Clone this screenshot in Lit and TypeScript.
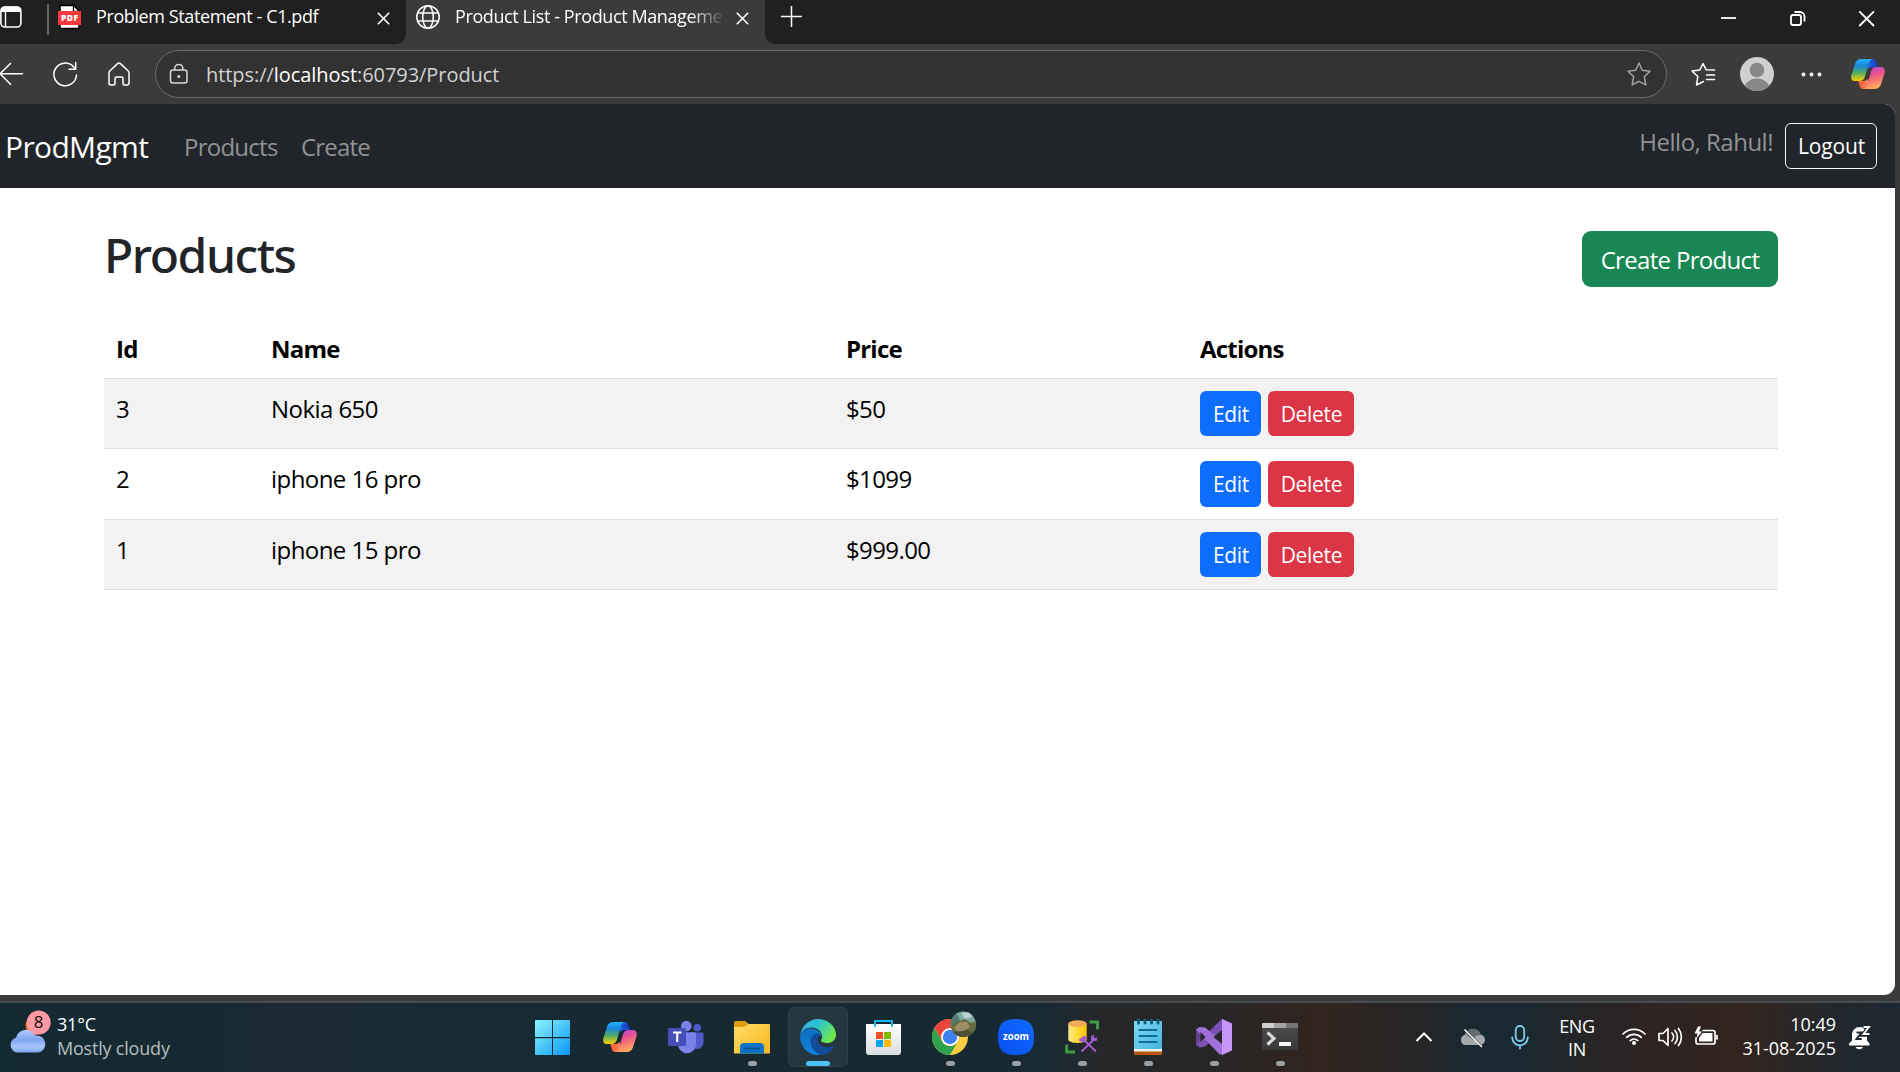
import { LitElement, html, css, svg, nothing } from "lit";
import { customElement } from "lit/decorators.js";

/* Four-colour ribbon mark, drawn in a 34 x 31 box. Used in the toolbar and the taskbar. */
const copilotMark = svg`
  <defs>
    <linearGradient id="cpA" x1="0" y1="0" x2="0" y2="1">
      <stop offset="0" stop-color="#22b5ff"/><stop offset=".3" stop-color="#1a86dc"/>
      <stop offset=".62" stop-color="#4fae62"/><stop offset="1" stop-color="#ffd000"/>
    </linearGradient>
    <linearGradient id="cpB" x1="0" y1="0" x2="0.3" y2="1">
      <stop offset="0" stop-color="#a54bf0"/><stop offset=".45" stop-color="#ee5189"/>
      <stop offset="1" stop-color="#ffa95a"/>
    </linearGradient>
    <linearGradient id="cpC" x1="0" y1="0" x2="1" y2="0">
      <stop offset="0" stop-color="#1d6fe0"/><stop offset="1" stop-color="#1439c4"/>
    </linearGradient>
    <linearGradient id="cpD" x1="0" y1="0" x2="1" y2="0">
      <stop offset="0" stop-color="#ff5a30"/><stop offset="1" stop-color="#ff8a5a"/>
    </linearGradient>
  </defs>
  <path fill="url(#cpC)" d="M15 .4H21.5C24 .4 24.8 2 25.4 4L26.8 8.6H22C20 8.6 18.6 9 17.6 11Z"/>
  <path fill="url(#cpD)" d="M19 30.6H12.5C10 30.6 9.2 29 8.6 27L7.2 22.4H12C14 22.4 15.4 22 16.4 20Z"/>
  <path fill="url(#cpA)" d="M10.5 .4H22C19.5 .6 18.6 2.4 17.8 5L14 18C13 21.2 11.4 22.6 8.4 22.6H4.4C.8 22.6-.4 20 .4 16.4L4 5.2C5 2 7 .4 10.5 .4Z"/>
  <path fill="url(#cpB)" d="M23.5 30.6H12C14.5 30.4 15.4 28.6 16.2 26L20 13C21 9.8 22.6 8.4 25.6 8.4H29.6C33.2 8.4 34.4 11 33.6 14.6L30 25.8C29 29 27 30.6 23.5 30.6Z"/>`;

const closeGlyph = html`<svg class="x" width="13" height="13" viewBox="0 0 13 13">
  <path d="M.8 .8L12.2 12.2M12.2 .8L.8 12.2" stroke="#fff" stroke-width="1.6" fill="none"/></svg>`;

@customElement("browser-bar")
export class BrowserBar extends LitElement {
  static styles = css`
    :host { display: block; height: 104px; background: #3b3b3b; color: #fff; font-family: "Open Sans", "Noto Sans", sans-serif; }
    svg { display: block; flex: none; }
    .strip { display: flex; height: 44px; }
    .dark { background: #202020; display: flex; align-items: flex-start; }
    .left { width: 406px; border-bottom-right-radius: 10px; box-sizing: border-box; }
    .active { width: 359px; display: flex; }
    .right { flex: 1; border-bottom-left-radius: 10px; }
    .panes { margin-top: 5px; }
    .rule { width: 2px; height: 31px; background: #636363; margin: 4px 9px 0 24px; }
    .pdf { margin-top: 4px; }
    .title { font-size: 18px; line-height: 24px; letter-spacing: -0.4px; white-space: nowrap; overflow: hidden; margin-top: 4px; }
    .t1 { width: 264px; margin-left: 15px; }
    .t2 { width: 267px; margin-left: 15px; -webkit-mask-image: linear-gradient(90deg, #000 88%, transparent 101%); mask-image: linear-gradient(90deg, #000 88%, transparent 101%); }
    .x { margin-top: 11.5px; }
    .left .x { margin-left: 17px; }
    .active .x { margin-left: 14px; }
    .globe { margin: 5px 0 0 10px; }
    .plus { margin: 6px 0 0 16px; }
    .win { margin-left: auto; }
    .tools { display: flex; height: 60px; align-items: center; }
    .nav { margin-top: -1px; }
    .pill { width: 1512px; height: 48px; box-sizing: border-box; border: 1.5px solid #6b6b6b; border-radius: 24px; background: #323232; display: flex; align-items: center; padding: 0 15px 0 13px; }
    .url { font-size: 20px; line-height: 28px; margin-left: 17px; color: #d2d2d2; letter-spacing: -0.06px; white-space: nowrap; padding-top: 1px; }
    .url b { font-weight: 400; color: #fff; }
    .fav { margin-left: auto; }
    .extras { flex: none; }
  `;
  render() {
    return html`
      <div class="strip">
        <div class="dark left">
          <svg class="panes" width="23" height="24" viewBox="0 0 23 24">
            <rect x=".9" y="2" width="20" height="20" rx="4" fill="none" stroke="#fff" stroke-width="1.6"/>
            <path d="M1 7V5.500A4 4 0 0 1 5 1.600H17A4 4 0 0 1 21 5.500V7Z" fill="#fff"/>
            <path d="M5.500 7V22" stroke="#fff" stroke-width="1.4"/>
          </svg>
          <div class="rule"></div>
          <svg class="pdf" width="23" height="26" viewBox="0 0 23 26">
            <path d="M2 1.500H16L21 7V24.500H2Z" fill="#fff" stroke="#000" stroke-width="1.6"/>
            <path d="M15.500 1V7.500H21.500Z" fill="#fff" stroke="#000" stroke-width="1.4"/>
            <rect x="0" y="7" width="23" height="14" fill="#f8393e"/>
            <text x="11.5" y="17.3" font-size="8.5" font-weight="800" text-anchor="middle" fill="#fff" textLength="17">PDF</text>
          </svg>
          <div class="title t1">Problem Statement - C1.pdf</div>
          ${closeGlyph}
        </div>
        <div class="active">
          <svg class="globe" width="24" height="24" viewBox="0 0 24 24" fill="none" stroke="#fff" stroke-width="1.5">
            <circle cx="12" cy="12" r="11.2"/><ellipse cx="12" cy="12" rx="5.3" ry="11.2"/>
            <path d="M1.500 8H22.500M1.500 16H22.500"/>
          </svg>
          <div class="title t2">Product List - Product Manageme</div>
          ${closeGlyph}
        </div>
        <div class="dark right">
          <svg class="plus" width="21" height="21" viewBox="0 0 21 21"><path d="M10.500 0V21M0 10.500H21" stroke="#fff" stroke-width="1.5"/></svg>
          <svg class="win" width="206" height="44" viewBox="0 0 206 44" fill="none" stroke="#fff" stroke-width="1.8">
            <path d="M27 18H42"/>
            <rect x="97" y="15" width="10" height="10" rx="2"/><path d="M100.500 12H106A4.500 4.500 0 0 1 110.500 16.500V21.500"/>
            <path d="M165.300 11.300L180 26M180 11.300L165.300 26"/>
          </svg>
        </div>
      </div>
      <div class="tools">
        <svg class="nav" width="155" height="48" viewBox="0 50 155 48" fill="none" stroke="#fff" stroke-width="1.5" stroke-linecap="round" stroke-linejoin="round">
          <path d="M22.500 73.800H0M10.500 63.500L0 73.800L10.500 84.200"/>
          <path d="M76.500 75A11.300 11.300 0 1 1 73.300 66.500L75.700 69M75.700 62.500V69.300H69"/>
          <path d="M109 84V73Q109 71.600 110 70.700L117.600 63.600Q119 62.400 120.400 63.600L128 70.700Q129 71.600 129 73V83Q129 85 127 85H124.500Q123 85 123 83.500V78.500Q123 77 121.500 77H116.500Q115 77 115 78.500V83.500Q115 85 113.500 85H111Q109 85 109 83Z"/>
        </svg>
        <div class="pill">
          <svg width="20" height="22" viewBox="0 0 20 22" fill="none" stroke="#d8d8d8" stroke-width="1.5">
            <rect x="1.5" y="7" width="16.5" height="13" rx="2.5"/><path d="M5.700 7V5.500A4 4 0 0 1 13.800 5.500V7"/><circle cx="9.8" cy="13.5" r="1.5" fill="#d8d8d8" stroke="none"/>
          </svg>
          <div class="url">https://<b>localhost</b>:60793/Product</div>
          <svg class="fav" width="24" height="24" viewBox="0 0 24 24" fill="none" stroke="#a3a3a3" stroke-width="1.5" stroke-linejoin="round">
            <path d="M12 1L15.300 8.300L23 9.300L17.300 14.700L18.800 22.800L12 19.400L5.200 22.800L6.700 14.700L1 9.300L8.700 8.300Z"/>
          </svg>
        </div>
        <svg class="extras" width="233" height="60" viewBox="1667 44 233 60">
          <g fill="none" stroke="#fff" stroke-width="1.5" stroke-linejoin="round" stroke-linecap="round">
            <path d="M1703.500 81.500L1696.500 85L1697.800 76.500L1692 71L1699.800 70L1703 63.500L1706.200 69.800L1714.500 70M1706.500 75H1714.500M1706.500 79.500H1714.500"/>
          </g>
          <clipPath id="av"><circle cx="1757" cy="74" r="17"/></clipPath>
          <circle cx="1757" cy="74" r="17" fill="#d2d0ce"/>
          <circle cx="1757" cy="70" r="7.3" fill="#8a8886"/>
          <ellipse cx="1757" cy="90" rx="13" ry="11.5" fill="#8a8886" clip-path="url(#av)"/>
          <g fill="#fff"><circle cx="1803.5" cy="74.5" r="2"/><circle cx="1811.5" cy="74.5" r="2"/><circle cx="1819.5" cy="74.5" r="2"/></g>
          <g transform="translate(1851 58.500)">${copilotMark}</g>
        </svg>
      </div>`;
  }
}

interface Product { id: number; name: string; price: string; }

@customElement("product-page")
export class ProductPage extends LitElement {
  static styles = css`
    :host { display: block; width: 1895px; height: 891px; background: #fff; border-radius: 0 11px 11px 0; overflow: hidden; font-family: "Open Sans", "Noto Sans", sans-serif; font-size: 24px; line-height: 36px; }
    .navbar { height: 84px; background: #212529; display: flex; align-items: flex-start; box-sizing: border-box; padding: 19px 18px 0 5px; white-space: nowrap; }
    .brand { font-size: 30px; line-height: 46px; color: #fff; letter-spacing: -0.65px; width: 179px; padding-top: 1px; }
    .link { color: #909294; letter-spacing: -0.75px; padding-top: 6px; }
    .products { width: 117px; }
    .create { letter-spacing: -0.8px; }
    .hello { margin: -5px 12px 0 auto; letter-spacing: -0.5px; }
    .logout { box-sizing: border-box; width: 92px; height: 46px; border: 1.5px solid #f8f9fa; border-radius: 6px; color: #fff; font-size: 21px; line-height: 45px; text-align: center; letter-spacing: -0.15px; padding-left: 1px; }
    .content { padding: 43px 117px 0 104px; }
    .head { display: flex; justify-content: space-between; align-items: flex-start; height: 87px; }
    h1 { margin: -5px 0 0; font: 500 48px/58px "Noto Sans", sans-serif; letter-spacing: -1.45px; color: #212529; }
    .add { width: 196px; height: 56px; border-radius: 9px; background: #198754; color: #fff; text-align: center; line-height: 58px; letter-spacing: -0.68px; }
    table { width: 1674px; border-collapse: separate; border-spacing: 0; table-layout: fixed; color: #000; }
    th, td { text-align: left; vertical-align: top; box-sizing: border-box; border-bottom: 1px solid #dee2e6; padding: 12px 12px 0; }
    th { height: 61px; font-weight: 700; letter-spacing: -0.8px; padding-top: 13px; }
    td { height: 70px; letter-spacing: -0.6px; }
    tbody tr:nth-child(2) td { height: 71px; }
    tbody tr:nth-child(2) .btn { height: 46px; }
    tbody tr:nth-child(odd) td { background: #f2f2f2; }
    tbody tr td:nth-child(-n + 2) { letter-spacing: -0.55px; }
    .c1 { width: 155px; } .c2 { width: 575px; } .c3 { width: 354px; }
    .acts { display: flex; gap: 7px; }
    .btn { height: 45px; border-radius: 6px; color: #fff; font-size: 21px; line-height: 46px; text-align: center; letter-spacing: -0.3px; box-sizing: border-box; padding-left: 1px; }
    .edit { width: 61px; background: #0d6efd; }
    .del { width: 86px; background: #dc3545; }
  `;
  private items: Product[] = [
    { id: 3, name: "Nokia 650", price: "$50" },
    { id: 2, name: "iphone 16 pro", price: "$1099" },
    { id: 1, name: "iphone 15 pro", price: "$999.00" },
  ];
  render() {
    return html`
      <div class="navbar">
        <span class="brand">ProdMgmt</span>
        <span class="link products">Products</span>
        <span class="link create">Create</span>
        <span class="link hello">Hello, Rahul!</span>
        <span class="logout">Logout</span>
      </div>
      <div class="content">
        <div class="head"><h1>Products</h1><div class="add">Create Product</div></div>
        <table>
          <thead><tr><th class="c1">Id</th><th class="c2">Name</th><th class="c3">Price</th><th>Actions</th></tr></thead>
          <tbody>
            ${this.items.map((p) => html`<tr>
              <td>${p.id}</td><td>${p.name}</td><td>${p.price}</td>
              <td><div class="acts"><div class="btn edit">Edit</div><div class="btn del">Delete</div></div></td>
            </tr>`)}
          </tbody>
        </table>
      </div>`;
  }
}

/* Each application icon is drawn in a 66 x 69 cell. */
const apps = [
  { state: "none", art: svg`
    <defs><linearGradient id="st" gradientUnits="userSpaceOnUse" x1="14" y1="17" x2="49" y2="52"><stop offset="0" stop-color="#8af4ff"/><stop offset="1" stop-color="#0a97f5"/></linearGradient></defs>
    <path fill="url(#st)" d="M15 17H31V34H14V18Q14 17 15 17ZM32 17H48Q49 17 49 18V34H32ZM14 35.200H31V52H15Q14 52 14 51ZM32 35.200H49V51Q49 52 48 52H32Z"/>` },
  { state: "none", art: svg`<g transform="translate(16 18.500)">${copilotMark}</g>` },
  { state: "none", art: svg`
    <circle cx="44.3" cy="24.7" r="3.8" fill="#5059c9"/><circle cx="33.3" cy="23" r="5.3" fill="#7b83eb"/>
    <path d="M38 29.500H49Q50.500 29.500 50.500 31V39A6.500 6.500 0 0 1 38 42Z" fill="#5059c9"/>
    <path d="M25 29.300H41.500Q43 29.300 43 31V41A9 9.200 0 0 1 25 41Z" fill="#7b83eb"/>
    <rect x="15" y="25" width="18" height="18" rx="1.5" fill="#464eb8"/>
    <path d="M20 29.500H28.500M24.200 29.500V39" stroke="#fff" stroke-width="2.2"/>` },
  { state: "open", art: svg`
    <defs><linearGradient id="fo" x1="0" y1="0" x2="1" y2="1"><stop offset="0" stop-color="#ffdc6c"/><stop offset="1" stop-color="#f9b71a"/></linearGradient></defs>
    <path d="M15 19.500Q15 18 16.500 18H26L30 21H50V30H15Z" fill="#dd9b0b"/>
    <path d="M15 24H25L30 21H50Q51 21 51 22V50.500H15Z" fill="url(#fo)"/>
    <path d="M21 50.500V44Q21 40 25 40H41Q45 40 45 44V50.500Z" fill="#0b74c6"/>
    <path d="M26 45.300H40" stroke="#0a4f91" stroke-width="1.8" stroke-linecap="round"/>` },
  { state: "active", art: svg`
    <defs>
      <linearGradient id="e1" x1="0" y1="0" x2="1" y2=".5"><stop offset="0" stop-color="#35b0ee"/><stop offset=".5" stop-color="#2cc3cf"/><stop offset="1" stop-color="#6de84b"/></linearGradient>
      <linearGradient id="e2" x1="0" y1="0" x2=".6" y2="1"><stop offset="0" stop-color="#0f6bb8"/><stop offset="1" stop-color="#0d86e4"/></linearGradient>
    </defs>
    <g transform="translate(15 16)">
      <path fill="url(#e2)" d="M0 17C1 11 6 9 11.500 9.500C17 10 21 13 21.500 17C19 14.500 13 20 16 26C18 31 24 33 31 30.500C27 35 22 36.500 17 36C7 35.500 0 27 0 17Z"/>
      <path fill="#124d9c" d="M12 17C8.500 23 11 31 19.500 36C26 36.300 31 33 33.500 28C34 27 33 26.500 32 27C28 29.500 20 28.500 18 23C17 19.500 18.500 17 20.500 15.500C17 13 13.500 14.500 12 17Z"/>
      <path fill="url(#e1)" d="M0 16.500C1.500 7 9 0 18 0C28 0 36 7.500 36 15.500C36 21 32 24 27.500 24C24 24 21 23 21 21.700C21 20.500 22 20 22 17.500C22 13 18 8.500 11.500 8.500C5.500 8.500 1 12 0 16.500Z"/>
    </g>` },
  { state: "none", art: svg`
    <defs><linearGradient id="ms" x1="0" y1="0" x2="0" y2="1"><stop offset="0" stop-color="#fff"/><stop offset="1" stop-color="#dcdde0"/></linearGradient></defs>
    <path d="M15 21H50V49Q50 52 47 52H18Q15 52 15 49Z" fill="url(#ms)"/>
    <path d="M24 23.800V18H41V23.800" fill="none" stroke="#1ab3ee" stroke-width="2"/>
    <rect x="25" y="29" width="7" height="7" fill="#f25022"/><rect x="33" y="29" width="7" height="7" fill="#7fba00"/>
    <rect x="25" y="37" width="7" height="7" fill="#00a4ef"/><rect x="33" y="37" width="7" height="7" fill="#ffb900"/>` },
  { state: "open", art: svg`
    <circle cx="33" cy="34" r="18" fill="#ffcd40"/>
    <path d="M17.400 25A18 18 0 0 1 48.600 25H33L25.200 38.500Z" fill="#e8453c"/>
    <path d="M17.400 25L25.200 38.500A9 9 0 0 0 40.800 38.500L33 52A18 18 0 0 1 17.400 25Z" fill="#2fa24f"/>
    <circle cx="33" cy="34" r="9" fill="#fff"/><circle cx="33" cy="34" r="7.2" fill="#3d82f0"/>
    <defs><clipPath id="pf"><circle cx="46.3" cy="21.3" r="12.7"/></clipPath></defs>
    <g clip-path="url(#pf)">
      <rect x="33" y="8" width="26" height="27" fill="#7fa8a2"/>
      <path d="M33 13L40 11L43 17L38 24L33 22Z" fill="#527a6c"/>
      <path d="M44 10L52 9L55 14L48 16Z" fill="#b9cfc9"/>
      <path d="M33 24L39 19L48 16L54 20L59 18V35H33Z" fill="#666c40"/>
      <path d="M37 25L43 19L50 19L53 24L47 28L40 28Z" fill="#9c8f66"/>
      <path d="M33 28L42 29L50 27L56 30L48 35H35Z" fill="#4a5030"/>
    </g>` },
  { state: "open", art: svg`
    <defs><linearGradient id="zm" x1="0" y1="1" x2="1" y2="0"><stop offset="0" stop-color="#0b50f0"/><stop offset="1" stop-color="#0f6aff"/></linearGradient></defs>
    <path d="M33 16C46 16 51 21 51 34C51 47 46 52 33 52C20 52 15 47 15 34C15 21 20 16 33 16Z" fill="url(#zm)"/>
    <text x="33" y="37" font-size="10.5" font-weight="700" text-anchor="middle" fill="#fff" textLength="26" lengthAdjust="spacingAndGlyphs">zoom</text>` },
  { state: "open", art: svg`
    <defs><linearGradient id="db" x1="0" y1="0" x2="1" y2="0"><stop offset="0" stop-color="#ffe98a"/><stop offset=".5" stop-color="#ffd83a"/><stop offset="1" stop-color="#f9c400"/></linearGradient></defs>
    <path d="M19.300 20.500V36.500C19.300 41 37.700 41 37.700 36.500V20.500Z" fill="url(#db)"/>
    <ellipse cx="28.5" cy="20.7" rx="9.2" ry="3.4" fill="#f0ab55"/>
    <path d="M40.500 19H48.500V26.500M17.700 41.500V49H26" fill="none" stroke="#3f9c45" stroke-width="3"/>
    <path d="M35 37L47 48.500M45.500 36L32.500 48.500" stroke="#a55bd0" stroke-width="2"/>
    <path d="M29.500 37L35 32.500L38.500 35L33.500 40ZM42 37.500V33L45.500 31.500L44.500 35L48.500 34.500L47.500 38Z" fill="#a55bd0"/>` },
  { state: "open", art: svg`
    <defs><linearGradient id="np" x1="0" y1="0" x2="1" y2="1"><stop offset="0" stop-color="#7fd9f5"/><stop offset="1" stop-color="#45b3dc"/></linearGradient></defs>
    <path d="M19 45H47V51Q47 52 46 52H20Q19 52 19 51Z" fill="#b9560f"/><rect x="19" y="44" width="28" height="4.5" fill="#eef2f4"/>
    <path d="M19 19Q19 18 20 18H46Q47 18 47 19V46H19Z" fill="url(#np)"/>
    <path d="M23.500 17V20M30 17V20M36.500 17V20M43 17V20" stroke="#0d5f80" stroke-width="3" stroke-linecap="round"/>
    <path d="M24.500 27H41.500M24.500 33H41.500M24.500 39H41.500" stroke="#0f6c94" stroke-width="2" stroke-linecap="round"/>` },
  { state: "open", art: svg`
    <path d="M15 26.500L18.500 24.500L22.500 28.500V40.500L18.500 44L15 42Z" fill="#64408f"/>
    <path d="M41 16L51 20.500L24 43.500L18.500 44.500L15 41.500L31 25.500Z" fill="#7d50b5"/>
    <path d="M15 26.500L18.500 24L24 24.500L42 39V52L38 51Z" fill="#a06fd8"/>
    <path d="M41 16L51 20.500V47.500L41 52Z" fill="#c596f8"/>
    <path d="M41 27V41L32.500 34Z" fill="#252729"/><path d="M19.500 29V39L24.500 34Z" fill="#252729"/>` },
  { state: "open", art: svg`
    <defs><linearGradient id="tm" x1="0" y1="0" x2="0" y2="1"><stop offset="0" stop-color="#4e4e50"/><stop offset="1" stop-color="#38383a"/></linearGradient></defs>
    <rect x="15" y="20" width="36" height="27" rx="1.5" fill="url(#tm)"/>
    <path d="M15 25V21Q15 20 16 20H27V25Z" fill="#cfcfcf"/><path d="M27 20H39V25H27Z" fill="#a3a3a3"/><path d="M39 20H50Q51 20 51 21V25H39Z" fill="#767676"/>
    <path d="M20.500 29.500L27 35.500L20.500 41.500" fill="none" stroke="#dadada" stroke-width="3.2"/><rect x="32" y="39" width="12" height="4" rx=".6" fill="#f4f4f4"/>` },
];

@customElement("task-bar")
export class TaskBar extends LitElement {
  static styles = css`
    :host { display: flex; height: 69px; color: #fff; font-family: "Open Sans", "Noto Sans", sans-serif; font-size: 18px; line-height: 24px;
      background: linear-gradient(90deg, #142a32 0, #152932 200px, #1a2a34 270px, #172a33 480px, #162931 950px, #172a35 1040px, #252728 1100px, #262627 1200px, #32241f 1320px, #2a2422 1370px, #252527 1425px, #182932 1475px, #1a2932 1520px, #272526 1590px, #2d2322 1650px, #33241f 1745px, #2a2625 1790px, #20272e 1850px, #1e2831 1900px); }
    svg { display: block; flex: none; }
    .weather { display: flex; width: 521px; }
    .wtext { padding-top: 9px; letter-spacing: -0.2px; }
    .wtext div { height: 24px; white-space: nowrap; }
    .cond { color: #b7bec1; }
    .apps { display: flex; }
    .tray { display: flex; margin-left: auto; }
    .lang { width: 66px; padding-top: 12px; text-align: center; line-height: 23px; letter-spacing: -0.3px; }
    .clock { width: 106px; margin-right: 1px; padding-top: 9px; text-align: right; white-space: nowrap; letter-spacing: -0.05px; }
  `;
  private indicator(state: string) {
    if (state === "open") return svg`<rect x="29" y="58" width="9" height="5" rx="2.5" fill="#9a9fa3"/>`;
    if (state === "active") return svg`<rect x="21" y="58" width="24" height="5" rx="2.5" fill="#4cc2ff"/>`;
    return nothing;
  }
  render() {
    return html`
      <div class="weather">
        <svg width="57" height="69" viewBox="0 0 57 69">
          <defs>
            <linearGradient id="cl" x1="0" y1="0" x2="0" y2="1"><stop offset="0" stop-color="#b5cbfa"/><stop offset=".45" stop-color="#7fa5f0"/><stop offset=".75" stop-color="#a9c8fb"/><stop offset="1" stop-color="#7da3ec"/></linearGradient>
          </defs>
          <circle cx="35" cy="22.5" r="9.5" fill="#f07a13"/>
          <path d="M17.500 49.500A7.500 7.500 0 0 1 16 34.800A10.500 10.500 0 0 1 35.500 32.500A8.500 8.500 0 1 1 38 49.500Z" fill="url(#cl)"/>
          <circle cx="38.7" cy="19.5" r="12" fill="#ff99a4"/>
          <text x="38.7" y="25" font-size="17" text-anchor="middle" fill="#111">8</text>
        </svg>
        <div class="wtext"><div>31°C</div><div class="cond">Mostly cloudy</div></div>
      </div>
      <div class="apps">
        ${apps.map((a) => html`<svg width="66" height="69" viewBox="0 0 66 69">
          ${a.state === "active" ? svg`<rect x="3.5" y="4.5" width="59" height="59" rx="6" fill="#24363e" stroke="#2f4048"/>` : nothing}
          ${a.art}${this.indicator(a.state)}</svg>`)}
      </div>
      <div class="tray">
        <svg width="144" height="69" viewBox="1400 1003 144 69" fill="none">
          <path d="M1416.500 1041L1424 1033.500L1431.500 1041" stroke="#fff" stroke-width="2"/>
          <path d="M1465 1045A5.200 5.200 0 0 1 1464.500 1035A9 9 0 0 1 1481 1034.800A5.200 5.200 0 0 1 1479 1045Z" fill="#a4a8aa"/>
          <path d="M1465.500 1034A8.200 8.200 0 0 1 1481 1034.800C1476.500 1035 1474 1037 1473 1040Z" fill="#626b70"/>
          <path d="M1466 1030.500L1482.500 1047" stroke="#182932" stroke-width="1.6"/><path d="M1464.500 1029.500L1482 1047" stroke="#fff" stroke-width="1.5"/>
          <g stroke="#7ccdea" stroke-width="1.8" stroke-linecap="round"><rect x="1515.7" y="1026" width="8.5" height="15" rx="4.2"/><path d="M1512.200 1037.500A7.800 7.800 0 0 0 1527.800 1037.500M1520 1045.300V1048.500"/></g>
        </svg>
        <div class="lang">ENG<br>IN</div>
        <svg width="120" height="69" viewBox="1610 1003 120 69" fill="none" stroke="#fff" stroke-width="1.7" stroke-linecap="round" stroke-linejoin="round">
          <path d="M1623 1034A15.500 15.500 0 0 1 1645 1034M1626.700 1037.300A10.500 10.500 0 0 1 1641.300 1037.300M1630.200 1040.700A5.500 5.500 0 0 1 1637.800 1040.700"/>
          <circle cx="1634" cy="1043" r="2" fill="#fff" stroke="none"/>
          <path d="M1659 1033.500H1663L1668 1028.500V1045.500L1663 1040.500H1659ZM1672 1033A6 6 0 0 1 1672 1041M1675 1030.500A10 10 0 0 1 1675 1043.500M1678.500 1028.500A14 14 0 0 1 1678.500 1045.500"/>
          <path d="M1703 1030.500H1713Q1715 1030.500 1715 1032.500V1042Q1715 1044 1713 1044H1698Q1696 1044 1696 1042V1038M1717 1035.500V1039"/>
          <path d="M1702.500 1033H1712.500V1041.500H1699V1038Z" fill="#fff" stroke="none"/>
          <path d="M1698 1026.500L1694.500 1033.500H1697.500L1696.500 1038.500L1702 1031.500H1699L1701 1026.500Z" fill="#fff" stroke="none"/>
        </svg>
        <div class="clock">10:49<br>31-08-2025</div>
        <svg width="63" height="69" viewBox="1837 1003 63 69">
          <path d="M1849 1045.500V1043.500L1852 1040.500V1034.500A7.500 7.500 0 0 1 1859.500 1027Q1862 1027 1864 1028.200L1867 1034.500V1040.500L1869.500 1043.500V1045.500Z" fill="#fff"/>
          <path d="M1855.500 1047H1863Q1862 1049.200 1859.300 1049.200Q1856.500 1049.200 1855.500 1047Z" fill="#fff"/>
          <path d="M1856.500 1032.500H1861.500L1856.500 1039H1861.700" fill="none" stroke="#20272e" stroke-width="1.9"/>
          <path d="M1863.500 1026.500H1869.500L1863.500 1034.500H1869.800" fill="none" stroke="#20272e" stroke-width="4.5"/>
          <path d="M1863.500 1027H1869L1863.500 1034H1869.500" fill="none" stroke="#fff" stroke-width="1.8"/>
        </svg>
      </div>`;
  }
}

@customElement("app-root")
export class AppRoot extends LitElement {
  static styles = css`
    :host { display: block; width: 1900px; height: 1072px; overflow: hidden; background: #3b3b3b; }
    .edge { height: 6px; }
    .line { height: 2px; background: #444a4e; }
  `;
  render() {
    return html`<browser-bar></browser-bar><product-page></product-page><div class="edge"></div><div class="line"></div><task-bar></task-bar>`;
  }
}
